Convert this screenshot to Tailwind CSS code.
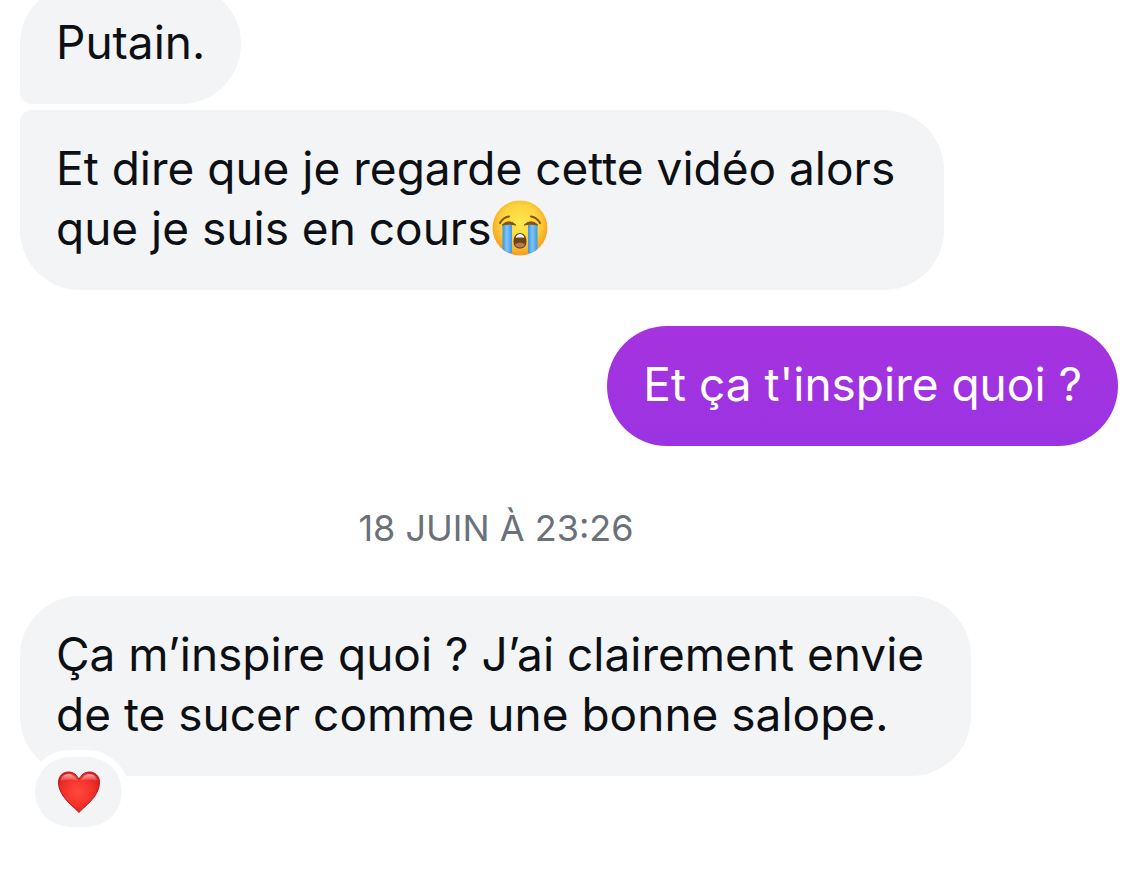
<!DOCTYPE html>
<html lang="fr">

<head>
    <meta charset="UTF-8">
    <meta name="viewport" content="width=device-width, initial-scale=1.0">
    <title>Messages</title>
    <script src="https://cdn.jsdelivr.net/npm/@tailwindcss/browser@4"></script>
</head>

<body class="bg-white font-['Inter','Liberation_Sans',sans-serif] text-[46px] leading-[60px] text-[#0c1014]">
    <main class="flex flex-col items-start pl-5 pr-6 pb-24">
        <!-- Received, first of a group -->
        <p class="-mt-4 px-9 pt-7 pb-8 bg-[#f3f4f6] rounded-[60px] rounded-bl-[12px]">Putain.</p>

        <!-- Received, last of a group -->
        <p class="mt-[6px] w-full max-w-[924px] px-9 pt-7 pb-8 bg-[#f3f4f6] rounded-[60px] rounded-tl-[12px]">
            Et dire que je regarde cette vidéo alors que je suis en cours<svg class="inline-block align-middle w-14 h-14 ml-px -mt-2" viewBox="0 0 56 56" role="img" aria-label="Visage qui pleure">
                <defs>
                    <radialGradient id="face" cx="50%" cy="42%" r="58%">
                        <stop offset="0" stop-color="#ffe94f" />
                        <stop offset="0.6" stop-color="#fdd23c" />
                        <stop offset="1" stop-color="#f39a1f" />
                    </radialGradient>
                    <linearGradient id="tear" x1="0" y1="0" x2="1" y2="0">
                        <stop offset="0" stop-color="#3d93dd" />
                        <stop offset="0.45" stop-color="#7cc6f8" />
                        <stop offset="1" stop-color="#3f98e2" />
                    </linearGradient>
                    <clipPath id="round"><circle cx="28" cy="28" r="27.5" /></clipPath>
                </defs>
                <circle cx="28" cy="28" r="27.5" fill="url(#face)" />
                <g clip-path="url(#round)">
                    <path d="M10.500 25h9.500v28h-9.500z" fill="url(#tear)" />
                    <path d="M36 25h9.500v28h-9.500z" fill="url(#tear)" />
                </g>
                <g fill="none" stroke="#8a5312" stroke-width="2" stroke-linecap="round">
                    <path d="M8 23q3-5.500 9-6.500" />
                    <path d="M48 23q-3-5.500-9-6.500" />
                </g>
                <path d="M10.500 25q6.500-6 13 0-6.500-1.500-13 0z" fill="#8a5312" stroke="#8a5312" stroke-width="1.200" stroke-linejoin="round" />
                <path d="M32.500 25q6.500-6 13 0-6.500-1.500-13 0z" fill="#8a5312" stroke="#8a5312" stroke-width="1.200" stroke-linejoin="round" />
                <path d="M28 33c4 0 6.500 3.500 6.500 8.500 0 4.500-2.500 7-6.500 7s-6.500-2.500-6.500-7C21.500 36.500 24 33 28 33z" fill="#70421a" />
                <path d="M23.500 37.500q1.500-3.500 4.500-3.500t4.500 3.500z" fill="#fff" />
                <path d="M23 44.500q5-4 10 0-1 3-5 3t-5-3z" fill="#b77a55" />
            </svg>
        </p>

        <!-- Sent -->
        <p class="self-end mt-9 px-9 pt-7 pb-8 rounded-[60px] bg-linear-to-b from-[#a633df] to-[#9b33e2] text-white">Et ça t'inspire quoi ?</p>

        <time class="block mt-[52px] w-full max-w-[952px] text-center text-[36px] text-[#6a717a]">18 JUIN À 23:26</time>

        <!-- Received, with a reaction hanging from its lower edge -->
        <div class="relative mt-[38px] w-full max-w-[951px]">
            <p class="px-9 pt-7 pb-8 bg-[#f3f4f6] rounded-[60px]">Ça m’inspire quoi ? J’ai clairement envie de te sucer comme une bonne salope.</p>
            <button type="button" aria-label="Réaction : cœur" class="absolute left-2 -bottom-[58px] flex items-center justify-center w-[101px] h-[84px] rounded-full border-[7px] border-white bg-[#f3f4f6] bg-clip-padding">
                <svg class="w-11 h-11" viewBox="0 0 44 44" aria-hidden="true">
                    <defs>
                        <radialGradient id="heart" cx="48%" cy="48%" r="60%">
                            <stop offset="0" stop-color="#ff4b3b" />
                            <stop offset="0.6" stop-color="#f5302a" />
                            <stop offset="1" stop-color="#d51b1b" />
                        </radialGradient>
                        <linearGradient id="shine" x1="0" y1="0" x2="0" y2="1">
                            <stop offset="0" stop-color="#fff" stop-opacity="0.600" />
                            <stop offset="1" stop-color="#fff" stop-opacity="0" />
                        </linearGradient>
                    </defs>
                    <path d="M22 42.500C18 37.500 1.500 27 1.500 12.500 1.500 6 6 2 11.500 2c5 0 8.500 3 10.500 7.500C24 5 27.500 2 32.500 2 38 2 42.500 6 42.500 12.500 42.500 27 26 37.500 22 42.500z" fill="url(#heart)" stroke="#b51718" stroke-width="1" />
                    <path d="M3.500 12c0-5 3.500-8 8-8 4 0 7 2.500 9 7-5-2-11-2-17 1z" fill="url(#shine)" />
                    <path d="M40.500 12c0-5-3.500-8-8-8-4 0-7 2.500-9 7 5-2 11-2 17 1z" fill="url(#shine)" />
                </svg>
            </button>
        </div>
    </main>
</body>

</html>
